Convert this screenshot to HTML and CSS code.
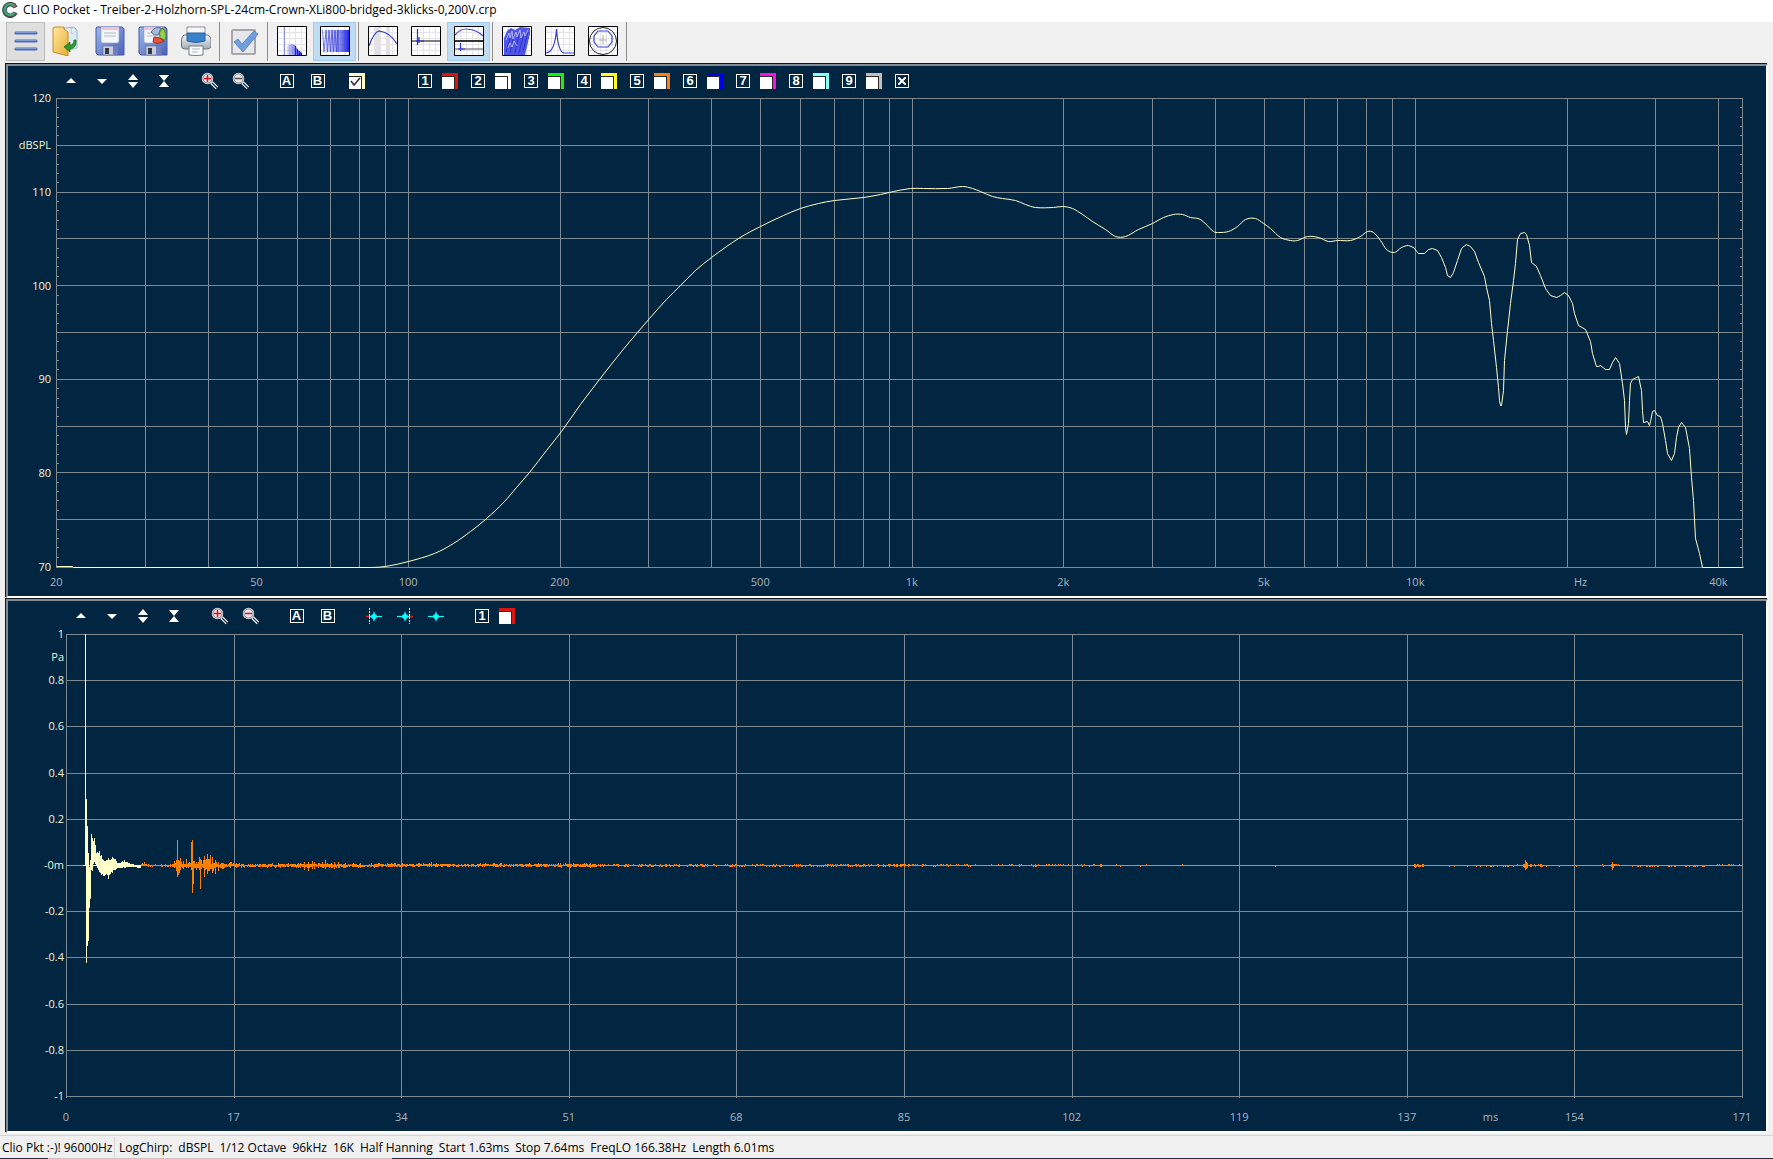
FILE: index.html
```html
<!DOCTYPE html>
<html lang="en">
<head>
<meta charset="utf-8">
<meta name="viewport" content="width=device-width, initial-scale=1">
<title>CLIO Pocket</title>
<link rel="stylesheet" href="styles.css">
</head>
<body>
<svg class="defs" aria-hidden="true">
  <defs>
    <linearGradient id="blue" x1="0" y1="0" x2="1" y2="1"><stop offset="0" stop-color="#9db8ea"/><stop offset="1" stop-color="#4a62bb"/></linearGradient>
    <linearGradient id="folder" x1="0" y1="0" x2="1" y2="1"><stop offset="0" stop-color="#ffe9a0"/><stop offset="1" stop-color="#e9ae35"/></linearGradient>
    <linearGradient id="metal" x1="0" y1="0" x2="0" y2="1"><stop offset="0" stop-color="#f4f6f8"/><stop offset="1" stop-color="#a3abb5"/></linearGradient>
    <linearGradient id="chirp" x1="0" y1="0" x2="1" y2="0"><stop offset="0" stop-color="#2a32e0" stop-opacity="0"/><stop offset="0.55" stop-color="#2a32e0" stop-opacity=".45"/><stop offset="1" stop-color="#2026e8"/></linearGradient>
    <linearGradient id="burst" x1="0" y1="0" x2="1" y2="0"><stop offset="0" stop-color="#2a32e0" stop-opacity=".15"/><stop offset="1" stop-color="#2026e8"/></linearGradient>
    <symbol id="floppy" viewBox="0 0 30 30">
      <path d="M2 1H27L29 3V29H3L1 27V2Z" fill="url(#blue)" stroke="#4658a8"/>
      <path d="M6 1H24V15Q24 17 22 17H8Q6 17 6 15Z" fill="#f5f6fb" stroke="#8d9ad0" stroke-width=".6"/>
      <path d="M6 1H24V4H6Z" fill="#f0c4cd"/>
      <path d="M9 7H21M9 10H21" stroke="#b5b9c4"/>
      <path d="M8 20H23V29H8Z" fill="#c9ced8" stroke="#5b699c" stroke-width=".6"/>
      <path d="M10 22H14V28H10Z" fill="#333a4a"/><path d="M18 20H23V29H18Z" fill="#6d7fc0"/>
    </symbol>
    <symbol id="thumb" viewBox="0 0 30 30">
      <path d="M1 1H29V29H1Z" fill="#fff"/>
      <path d="M6.500 1V29M12.500 1V29M18.500 1V29M24.500 1V29M1 6.500H29M1 12.500H29M1 18.500H29M1 24.500H29" stroke="#e4e4ea"/>
    </symbol>
    <symbol id="up" viewBox="0 0 16 16"><path d="M8 5L13 10H3Z"/></symbol>
    <symbol id="down" viewBox="0 0 16 16"><path d="M3 6H13L8 11Z"/></symbol>
    <symbol id="spread" viewBox="0 0 16 16"><path d="M8 1L13 7H3ZM3 9H13L8 15Z"/></symbol>
    <symbol id="squeeze" viewBox="0 0 16 16"><path d="M3 2H13L8 8ZM8 8L13 14H3Z"/></symbol>
    <symbol id="lens" viewBox="0 0 18 18">
      <path d="M10.500 10.500L16 16" stroke="#fff" stroke-width="3.500"/>
      <path d="M11 11L16.500 16.500" stroke="#14273c" stroke-width="1.200"/>
      <circle cx="6.500" cy="6.500" r="5" fill="#e9e4ea" stroke="#e8e8e8" stroke-width="1.500"/>
      <circle cx="6.500" cy="6.500" r="4.600" fill="none" stroke="#5b5560" stroke-width=".7"/>
    </symbol>
    <symbol id="pulse" viewBox="0 0 16 16"><path d="M0 8.500H16" stroke="#00ffff" stroke-width="1.200"/><path d="M4 8.500L7 6L8 3L9 6L12 8.500L9 11L8 14L7 11Z" fill="#00ffff"/></symbol>
  </defs>
</svg>

<header class="titlebar">
  <svg class="logo" viewBox="0 0 16 16" aria-hidden="true"><path d="M13.500 5.500A5.800 5.800 0 1 0 13.500 10.500" fill="none" stroke="#454a4d" stroke-width="4.600"/><path d="M13 5A5.500 5.500 0 1 0 12.500 11" fill="none" stroke="#3fa67d" stroke-width="2.400"/><path d="M13 1V6" stroke="#d23b2e" stroke-width="1"/></svg>
  <h1>CLIO Pocket - Treiber-2-Holzhorn-SPL-24cm-Crown-XLi800-bridged-3klicks-0,200V.crp</h1>
</header>

<nav class="toolbar" aria-label="Main">
  <button class="tool menu" aria-label="Menu"><svg viewBox="0 0 30 30"><path d="M5 7H25M5 15H25M5 23H25" stroke="#4d6cb0" stroke-width="3" stroke-linecap="round"/><path d="M5 6.500H25M5 14.500H25M5 22.500H25" stroke="#7e9bd6" stroke-width="1" stroke-linecap="round"/></svg></button>
  <button class="tool" aria-label="Open"><svg viewBox="0 0 30 30"><path d="M12 2L22 1L25 4V22L13 25Z" fill="#dcebf8" stroke="#9db7d0"/><path d="M19 2L25 4L20 8Z" fill="#f8fcff" stroke="#9db7d0" stroke-width=".6"/><path d="M1 2L3 1H12V3L16 6V30L1 26Z" fill="url(#folder)" stroke="#c98f26"/><path d="M24 14Q25 22 18 23V26L12 21L18 16V19Q22 19 22 14Z" fill="#2f9a2c" stroke="#17661a" stroke-width=".7"/></svg></button>
  <button class="tool" aria-label="Save"><svg viewBox="0 0 30 30"><use href="#floppy"/></svg></button>
  <button class="tool" aria-label="Export"><svg viewBox="0 0 30 30"><use href="#floppy"/><path d="M13 6Q17 0 23 2L20 9Q16 10 13 6Z" fill="#a9bce0" stroke="#53689c"/><path d="M24 2Q30 7 27 14L22 12Q20 7 24 2Z" fill="#9bd04a" stroke="#4f8a22"/><path d="M16 11Q22 11 26 15Q20 19 15 16Z" fill="#e4553b" stroke="#a02c1c"/></svg></button>
  <button class="tool" aria-label="Print"><svg viewBox="0 0 30 30"><path d="M6 1H24V10H6Z" fill="#f7f7f7" stroke="#8d949c"/><path d="M3 9H27Q30 10 30 14V21Q29 23 26 23H4Q1 23 0.500 21V14Q1 10 3 9Z" fill="url(#metal)" stroke="#6f7883"/><path d="M6 7H24V15Q15 18 6 15Z" fill="#3b82cc" stroke="#2a5f9c"/><path d="M8 20H22V29Q15 30 8 29Z" fill="#fff" stroke="#737b84"/><path d="M11 23H19M11 26H17" stroke="#aab0b8"/></svg></button>
  <span class="sep"></span>
  <button class="tool" aria-label="Apply"><svg viewBox="0 0 30 30"><rect x="3" y="4" width="23" height="24" rx="1" fill="#e6e7ea" stroke="#a5a7ab" stroke-width="2"/><path d="M5 16L9 13L13 18L25 5L29 8L14 26Z" fill="#6f9edb" stroke="#4c7dc0" stroke-width=".8"/></svg></button>
  <span class="sep"></span>
  <button class="tool" aria-label="FFT"><svg viewBox="0 0 30 30"><use href="#thumb"/><path d="M7.500 1V29" stroke="#8b8fe8"/><path d="M10 29V20L14 18L18 19L21 24L25 27V29Z" fill="url(#burst)"/><path d="M18.500 29V20M20.500 29V23M22.500 29V25M24.500 29V27" stroke="#1a20d8"/><path class="edge" d="M.5 .5H29.500V29.500H.5Z"/></svg></button>
  <button class="tool active" aria-label="LogChirp"><svg viewBox="0 0 30 30"><use href="#thumb"/><path d="M2.500 4L4 26L6 4L7.500 26L9 4L10.500 26L12 4L13.500 26L15 4L16.500 26L18 4V26" fill="none" stroke="#5358dc" stroke-width=".8"/><path d="M3 4H29V26H3Z" fill="url(#chirp)"/><path class="edge" d="M.5 .5H29.500V29.500H.5Z"/></svg></button>
  <span class="sep"></span>
  <button class="tool" aria-label="Frequency"><svg viewBox="0 0 30 30"><use href="#thumb"/><path d="M7 1H12V29H7ZM18 1H22V29H18Z" fill="#e2e2e2"/><path d="M1 20Q6 6 11 5Q22 6 29 18" fill="none" stroke="#2f34cc" stroke-width="1.200"/><path class="edge" d="M.5 .5H29.500V29.500H.5Z"/></svg></button>
  <button class="tool" aria-label="Time"><svg viewBox="0 0 30 30"><use href="#thumb"/><path d="M1 15H29" stroke="#555" stroke-width="1.500"/><path d="M6.500 3V19M8 11V17M5 15H13" stroke="#2a30d8" stroke-width="1.200"/><path class="edge" d="M.5 .5H29.500V29.500H.5Z"/></svg></button>
  <button class="tool active" aria-label="Frequency and time"><svg viewBox="0 0 30 30"><use href="#thumb"/><path d="M1 9Q6 3 12 3Q22 3 29 10" fill="none" stroke="#4a4fd0" stroke-width="1.200"/><path d="M0 15H30" stroke="#333" stroke-width="2"/><path d="M1 23H29" stroke="#555"/><path d="M6.500 17V25M4 23H11" stroke="#2a30d8" stroke-width="1.200"/><path class="edge" d="M.5 .5H29.500V29.500H.5Z"/></svg></button>
  <span class="sep"></span>
  <button class="tool" aria-label="Waterfall"><svg viewBox="0 0 30 30"><use href="#thumb"/><path d="M5 5L9 2L13 4L18 1L28 2V8L23 29H2V12Z" fill="#5055ea"/><path d="M4 26L8 12M8 27L12 9M13 27L17 8M17 27L22 7M21 25L26 6" stroke="#2a2fc8"/><path d="M4 14L7 7L8 12L10 5L11 13L14 6L15 11L18 4L19 12L22 6L23 10L26 4M6 22L8 17L10 21L12 15L15 20" fill="none" stroke="#c8caff" stroke-width=".8"/><path class="edge" d="M.5 .5H29.500V29.500H.5Z"/></svg></button>
  <button class="tool" aria-label="Impedance"><svg viewBox="0 0 30 30"><use href="#thumb"/><path d="M1 27Q10 26 11.500 3Q13 26 19 27H29" fill="none" stroke="#3b40d4" stroke-width="1.200"/><path class="edge" d="M.5 .5H29.500V29.500H.5Z"/></svg></button>
  <button class="tool" aria-label="Polar"><svg viewBox="0 0 30 30"><use href="#thumb"/><circle cx="15" cy="15" r="13.500" fill="none" stroke="#222"/><path d="M10 5H20L24 10V16L20 21H10L6 16V10Z" fill="none" stroke="#3b40d4" stroke-width="1.200" stroke-linejoin="round"/><path d="M15 9V18M11 14H19" stroke="#aaa"/><path class="edge" d="M.5 .5H29.500V29.500H.5Z"/></svg></button>
  <span class="sep"></span>
</nav>

<main class="workspace">
  <section class="panel response" aria-label="Frequency response">
    <div class="chartbar">
      <div class="group">
        <button class="mini" aria-label="Move up"><svg><use href="#up"/></svg></button>
        <button class="mini" aria-label="Move down"><svg><use href="#down"/></svg></button>
        <button class="mini" aria-label="Expand"><svg><use href="#spread"/></svg></button>
        <button class="mini" aria-label="Compress"><svg><use href="#squeeze"/></svg></button>
      </div>
      <div class="group">
        <button class="mini" aria-label="Zoom in"><svg class="zoom" viewBox="0 0 18 18"><use href="#lens"/><path d="M3 6.500H10M6.500 3V10" stroke="#e01020" stroke-width="1.500"/></svg></button>
        <button class="mini" aria-label="Zoom out"><svg class="zoom" viewBox="0 0 18 18"><use href="#lens"/><path d="M3 6.500H10" stroke="#555" stroke-width="1.500"/></svg></button>
      </div>
      <div class="group">
        <button class="mini"><span class="key">A</span></button>
        <button class="mini"><span class="key">B</span></button>
      </div>
      <input class="swatch main" type="checkbox" checked aria-label="Main trace">
      <div class="traces">
        <label class="trace"><span class="key">1</span><input class="swatch red" type="checkbox"></label>
        <label class="trace"><span class="key">2</span><input class="swatch white" type="checkbox"></label>
        <label class="trace"><span class="key">3</span><input class="swatch green" type="checkbox"></label>
        <label class="trace"><span class="key">4</span><input class="swatch yellow" type="checkbox"></label>
        <label class="trace"><span class="key">5</span><input class="swatch orange" type="checkbox"></label>
        <label class="trace"><span class="key">6</span><input class="swatch blue" type="checkbox"></label>
        <label class="trace"><span class="key">7</span><input class="swatch magenta" type="checkbox"></label>
        <label class="trace"><span class="key">8</span><input class="swatch cyan" type="checkbox"></label>
        <label class="trace"><span class="key">9</span><input class="swatch grey" type="checkbox"></label>
        <button class="close" aria-label="Clear traces"><span class="key"><svg class="cross" viewBox="0 0 8 8"><path d="M0 0L8 8M8 0L0 8" stroke="#fff" stroke-width="2"/></svg></span></button>
      </div>
    </div>
    <div class="yaxis">
      <span>120</span><span>dBSPL</span><span>110</span><span></span><span>100</span><span></span><span>90</span><span></span><span>80</span><span></span><span>70</span>
    </div>
    <svg class="plot" id="response" viewBox="56 98 1686 469" preserveAspectRatio="none" role="img" aria-label="Sound pressure level against frequency"></svg>
    <div class="xaxis log" id="frequencies"></div>
  </section>

  <section class="panel impulse" aria-label="Impulse response">
    <div class="chartbar">
      <div class="group">
        <button class="mini" aria-label="Move up"><svg><use href="#up"/></svg></button>
        <button class="mini" aria-label="Move down"><svg><use href="#down"/></svg></button>
        <button class="mini" aria-label="Expand"><svg><use href="#spread"/></svg></button>
        <button class="mini" aria-label="Compress"><svg><use href="#squeeze"/></svg></button>
      </div>
      <div class="group">
        <button class="mini" aria-label="Zoom in"><svg class="zoom" viewBox="0 0 18 18"><use href="#lens"/><path d="M3 6.500H10M6.500 3V10" stroke="#e01020" stroke-width="1.500"/></svg></button>
        <button class="mini" aria-label="Zoom out"><svg class="zoom" viewBox="0 0 18 18"><use href="#lens"/><path d="M3 6.500H10" stroke="#e01020" stroke-width="1.500"/></svg></button>
      </div>
      <div class="group">
        <button class="mini"><span class="key">A</span></button>
        <button class="mini"><span class="key">B</span></button>
      </div>
      <div class="group">
        <button class="mini" aria-label="Window start"><svg viewBox="0 0 16 16"><use href="#pulse"/><path d="M3.500 0V16" stroke="#ffff40" stroke-dasharray="2 1"/><path d="M0 8.500H3" stroke="#e02020"/></svg></button>
        <button class="mini" aria-label="Window stop"><svg viewBox="0 0 16 16"><use href="#pulse"/><path d="M12.500 0V16" stroke="#ffff40" stroke-dasharray="2 1"/><path d="M13 8.500H16" stroke="#e02020"/></svg></button>
        <button class="mini" aria-label="Full window"><svg viewBox="0 0 16 16"><use href="#pulse"/></svg></button>
      </div>
      <div class="traces">
        <label class="trace"><span class="key">1</span><input class="swatch red" type="checkbox"></label>
      </div>
    </div>
    <div class="yaxis">
      <span>1</span><span>Pa</span><span>0.8</span><span></span><span>0.6</span><span></span><span>0.4</span><span></span><span>0.2</span><span></span><span>-0m</span><span></span><span>-0.2</span><span></span><span>-0.4</span><span></span><span>-0.6</span><span></span><span>-0.8</span><span></span><span>-1</span>
    </div>
    <svg class="plot" id="impulse" viewBox="66 634 1676 462" preserveAspectRatio="none" role="img" aria-label="Sound pressure against time"></svg>
    <div class="xaxis linear">
      <span>0</span><span></span><span>17</span><span></span><span>34</span><span></span><span>51</span><span></span><span>68</span><span></span><span>85</span><span></span><span>102</span><span></span><span>119</span><span></span><span>137</span><span>ms</span><span>154</span><span></span><span>171</span>
    </div>
  </section>
</main>

<footer class="status">
  <span class="device">Clio Pkt :-)! 96000Hz</span>
  <span class="settings"><span>LogChirp:</span><span>dBSPL</span><span>1/12 Octave</span><span>96kHz</span><span>16K</span><span>Half Hanning</span><span>Start 1.63ms</span><span>Stop 7.64ms</span><span>FreqLO 166.38Hz</span><span>Length 6.01ms</span></span>
</footer>
<script src="charts.js"></script>
</body>
</html>
```

FILE: styles.css
```css
* { box-sizing: border-box; }

body {
  margin: 0;
  min-height: 100vh;
  display: flex;
  flex-direction: column;
  background: #f0f0f0;
  color: #000;
  font: 12px/16px "Open Sans", "Noto Sans", sans-serif;
}

button { margin: 0; padding: 0; border: 0; background: none; font: inherit; color: inherit; }
.defs { position: absolute; width: 0; height: 0; }

.titlebar { display: flex; align-items: center; gap: 5px; height: 22px; padding-left: 2px; padding-bottom: 2px; background: #fff; }
.titlebar h1 { margin: 0; font-size: 12px; font-weight: 400; white-space: nowrap; }
.logo { width: 16px; height: 16px; }

.toolbar { display: flex; height: 41px; padding: 0 0 2px 6px; }
.tool { display: flex; align-items: center; justify-content: center; width: 43px; padding-bottom: 1px; border: 1px solid transparent; }
.tool svg { width: 30px; height: 30px; fill: none; }
.tool.menu { width: 39px; background: #dfdfdf; border-color: #bdbdbd; }
.tool.active { background: #c0dcf3; border-color: #a3cdf0; }
.edge { fill: none; stroke: #000; }
.sep { width: 5px; background: linear-gradient(#8d8d8d, #8d8d8d) center / 1px 100% no-repeat; }

.workspace { flex: 1; display: flex; flex-direction: column; margin: 0 5px 0 6px; }

.panel {
  flex: 1;
  display: grid;
  min-height: 320px;
  margin-top: 1px;
  background: #022541;
  border: 2px solid;
  border-color: #828c96 #fff #fff #828c96;
  box-shadow: -1px -1px 0 #10151b;
}
.response { grid-template: 32px 1fr 29px / 48px 1fr 24px; }
.impulse { grid-template: 33px 1fr 35px / 58px 1fr 24px; }

.chartbar { grid-column: 1 / -1; display: flex; align-items: center; gap: 15px; height: 30px; padding-left: 47px; }
.impulse .chartbar { padding-left: 57px; }
.group, .traces { display: flex; align-items: center; }
.mini { display: flex; align-items: center; justify-content: center; width: 31px; height: 20px; }
.mini svg { width: 16px; height: 16px; fill: #fff; }
.mini .zoom { width: 18px; height: 18px; }
.key { display: flex; align-items: center; justify-content: center; width: 14px; height: 14px; border: 1px solid #fff; color: #fff; font: 700 13px/12px "Liberation Sans", sans-serif; }
.cross { width: 8px; height: 8px; }
.traces { margin-left: 38px; }
.impulse .traces { margin-left: 9px; }
.trace { display: flex; align-items: center; gap: 10px; width: 53px; }

.swatch {
  appearance: none;
  width: 16px;
  height: 16px;
  margin: 0;
  border-top: 3px solid var(--ink);
  border-right: 3px solid var(--ink);
  background: linear-gradient(#fff, #fff) 0 100% / 12px 12px no-repeat, #2a2a20;
}
.main { --ink: #ffffc8; background: url("data:image/svg+xml,%3Csvg xmlns='http://www.w3.org/2000/svg' viewBox='0 0 12 12'%3E%3Cpath d='M2 5L5 9L11 2' fill='none' stroke='%23333' stroke-width='1.600'/%3E%3C/svg%3E") 0 0 / 12px 12px no-repeat, linear-gradient(#fff, #fff) 0 100% / 12px 12px no-repeat, #2a2a20; margin-left: 1px; }
.red { --ink: #dc1414; }
.white { --ink: #fff; }
.green { --ink: #14f014; }
.yellow { --ink: #ffff20; }
.orange { --ink: #f08020; }
.blue { --ink: #0000e6; }
.magenta { --ink: #f014e6; }
.cyan { --ink: #80ffff; }
.grey { --ink: #c0c0c0; }

.yaxis { display: flex; flex-direction: column; justify-content: space-between; align-items: flex-end; padding-right: 5px; color: #f4f4d6; font-size: 11px; }
.impulse .yaxis { padding-right: 2px; }
.yaxis span { height: 0; line-height: 0; }

.plot { display: block; grid-column: 2; width: 100%; height: 100%; min-height: 0; overflow: visible; fill: none; shape-rendering: crispEdges; }
.plot path { vector-effect: non-scaling-stroke; }
.grid { stroke: #7f8a90; }
.curve { stroke: #ffffc8; }
.tail { stroke: #ff8000; }
.smooth { shape-rendering: auto; }

.xaxis { grid-column: 2; color: #aab6c0; font-size: 11px; }
.log { position: relative; }
.log span { position: absolute; top: 7px; width: 40px; margin-left: -20px; text-align: center; }
.linear { display: flex; justify-content: space-between; padding-top: 13px; }
.linear span { display: flex; justify-content: center; width: 0; }

.status {
  display: flex;
  height: 26px;
  padding: 4px 0 0;
  background:
    linear-gradient(#d4d4d4, #d4d4d4) 0 2px / 100% 1px no-repeat,
    linear-gradient(90deg, #16314c 48px, #c4c4c4 48px 392px, #16314c 392px) 0 100% / 100% 1px no-repeat;
  line-height: 22px;
  white-space: nowrap;
}
.device { width: 115px; height: 20px; padding-left: 2px; border-right: 1px solid #d4d4d4; }
.settings { display: flex; gap: 6px; padding-left: 4px; }
```

FILE: charts.js
```js
const NS = "http://www.w3.org/2000/svg";

function addPath(svg, className, d) {
  const path = document.createElementNS(NS, "path");
  path.setAttribute("class", className);
  path.setAttribute("d", d);
  svg.append(path);
}

/* Frequency response: log axis from 20 Hz, 503.5 units to a decade */
const response = document.getElementById("response");
const freqX = f => 56.3 + 503.5 * Math.log10(f / 20);

let grid = "";
for (const decade of [10, 100, 1000, 10000]) {
  for (let n = 1; n < 10; n++) {
    const f = decade * n;
    if (f < 20 || f > 40000) continue;
    grid += `M${Math.round(freqX(f)) + 0.5} 98V567`;
  }
}
grid += "M1742.5 98V567M56 567.5H1743";
for (let db = 0; db < 50; db++) {
  const y = Math.round(98 + db * 9.36) + 0.5;
  grid += db % 5 === 0 ? `M56 ${y}H1743` : `M56 ${y}H59M1740 ${y}H1743`;
}
addPath(response, "grid", grid);

const level = [
  56,566, 72,566, 73,567, 370,567, 385,566, 408,561, 434,553, 453,543, 470,531, 485,519, 504,501, 516,487, 529,472,
  546,450, 561,431, 580,404, 599,379, 621,351, 637,332, 649,318, 666,299, 680,285, 695,270, 711,257, 738,238,
  760,226, 783,215, 800,208, 818,203, 834,200, 863,197, 880,194, 893,191, 910,188, 923,188, 947,188,
  962,186, 972,188, 980,191, 992,196, 1002,198, 1015,200, 1025,204, 1035,207, 1053,207, 1062,206, 1072,208,
  1082,214, 1092,221, 1105,229, 1115,236, 1125,236, 1138,229, 1152,223, 1163,217, 1173,214, 1182,214, 1190,217,
  1200,219, 1213,231, 1218,232, 1228,231, 1237,226, 1245,219, 1255,218, 1263,223, 1270,228, 1280,237, 1290,240,
  1297,240, 1307,236, 1318,237, 1328,241, 1337,240, 1350,240, 1360,236, 1367,231, 1373,232, 1380,240, 1386,249,
  1394,252, 1401,247, 1408,245, 1413,247, 1418,253, 1424,253, 1428,249, 1432,248, 1437,250, 1441,257, 1445,267,
  1447,275, 1450,277, 1453,272, 1457,260, 1461,248, 1466,244, 1470,246, 1474,251, 1478,262, 1484,276, 1486,287,
  1489,300, 1491,323, 1493,340, 1496,367, 1498,387, 1499,400, 1500,405, 1501,405, 1503,390, 1504,360, 1507,330,
  1510,303, 1513,280, 1515,263, 1517,239, 1520,233, 1524,232, 1526,234, 1529,245, 1531,262, 1536,266, 1540,275,
  1545,288, 1550,295, 1556,297, 1560,295, 1564,292, 1568,295, 1572,303, 1574,313, 1578,325, 1585,329, 1590,341,
  1592,353, 1596,366, 1598,366, 1600,365, 1605,369, 1609,369, 1612,362, 1615,357, 1619,363, 1622,383, 1624,400,
  1625,427, 1626,434, 1628,423, 1629,400, 1630,383, 1632,379, 1638,376, 1641,390, 1642,410, 1643,422, 1647,421,
  1649,425, 1650,421, 1652,411, 1654,410, 1657,415, 1660,416, 1662,423, 1665,440, 1667,453, 1671,460, 1674,453,
  1676,437, 1678,427, 1681,422, 1685,427, 1689,448, 1691,477, 1693,500, 1695,538, 1699,553, 1702,567, 1743,567
];

/* Interpolate with a spline between 370 and 1410, where samples are sparse; straight steps elsewhere */
const points = [];
for (let i = 0; i < level.length; i += 2) points.push([level[i] + 0.5, level[i + 1] + 0.5]);
const slope = i => (points[i + 1][1] - points[i - 1][1]) / (points[i + 1][0] - points[i - 1][0]);
let curve = `M${points[0]}`;
for (let i = 1; i < points.length; i++) {
  const [x0, y0] = points[i - 1];
  const [x1, y1] = points[i];
  if (x0 < 370 || x1 > 1410) {
    curve += `L${x1} ${y1}`;
    continue;
  }
  const h = (x1 - x0) / 3;
  const start = x0 < 371 ? 0 : slope(i - 1);
  curve += `C${x0 + h} ${y0 + h * start} ${x1 - h} ${y1 - h * slope(i)} ${x1} ${y1}`;
}
addPath(response, "curve smooth", curve);

const frequencies = document.getElementById("frequencies");
const marks = [[20, "20"], [50, "50"], [100, "100"], [200, "200"], [500, "500"], [1000, "1k"], [2000, "2k"],
  [5000, "5k"], [10000, "10k"], [21300, "Hz"], [40000, "40k"]];
for (const [f, text] of marks) {
  const label = document.createElement("span");
  label.textContent = text;
  label.style.left = `${((freqX(f) - 56) / 16.86).toFixed(2)}%`;
  frequencies.append(label);
}

/* Impulse response: ten divisions each way, zero line at 865 */
const impulse = document.getElementById("impulse");
let cells = "";
for (let i = 0; i <= 10; i++) {
  cells += `M${Math.round(66 + i * 167.6) + 0.5} 634V1098`;
  cells += `M66 ${Math.round(634 + i * 46.2) + 0.5}H1743`;
}
addPath(impulse, "grid", cells);

let seed = 7;
function random() {
  seed = (seed * 16807) % 2147483647;
  return seed / 2147483647;
}

/* Each entry: position, reach above zero, reach below zero */
function bars(envelope, spread) {
  const noise = () => 1 - spread * Math.sqrt(random());
  let d = "";
  for (let i = 0; i < envelope.length - 1; i++) {
    const [x0, up0, down0] = envelope[i];
    const [x1, up1, down1] = envelope[i + 1];
    for (let x = x0; x < x1; x++) {
      const t = (x - x0) / (x1 - x0);
      const up = Math.round((up0 + (up1 - up0) * t) * (x === x0 ? 1 : noise()));
      const down = Math.round((down0 + (down1 - down0) * t) * (x === x0 ? 1 : noise()));
      d += `M${x + 0.5} ${865 - up}V${866 + down}`;
    }
  }
  return d;
}

const tail = [
  [141, 1, 0], [144, 3, 0], [148, 1, 1], [170, 1, 1], [174, 4, 2], [176, 5, 5], [177, 25, 11], [178, 5, 9],
  [179, 4, 7], [180, 7, 4], [183, 4, 3], [186, 6, 2], [188, 2, 2], [191, 23, 4], [192, 25, 27], [193, 4, 18],
  [194, 4, 2], [196, 3, 4], [199, 8, 4], [200, 6, 23], [201, 5, 3], [204, 9, 11], [205, 5, 4], [207, 11, 8],
  [209, 6, 5], [210, 10, 3], [212, 8, 7], [215, 5, 8], [218, 3, 5], [222, 2, 3], [230, 3, 2], [236, 2, 2],
  [300, 2, 2], [304, 3, 4], [308, 3, 5], [312, 4, 3], [314, 3, 3], [325, 5, 3], [334, 3, 3], [345, 2, 2],
  [360, 2, 2], [431, 3, 1], [436, 2, 1], [500, 2, 1], [590, 2, 2], [600, 1, 1], [900, 1, 1], [901, 1, 0.8],
  [1100, 0.8, 0.6], [1101, 0.6, 0.6], [1414, 0.5, 0.5], [1415, 1, 2], [1422, 1, 1], [1423, 0.5, 0.5],
  [1513, 0, 1], [1517, 1, 0], [1523, 0.5, 1], [1524, 1, 2], [1525, 5, 4], [1526, 3, 3], [1527, 2, 2],
  [1531, 1, 1], [1540, 1, 1], [1541, 0.6, 0.6], [1611, 0.6, 0.6], [1612, 3, 4], [1613, 1, 2], [1616, 1, 0],
  [1632, 0, 1], [1640, 0, 1], [1647, 0, 1], [1703, 0, 1], [1719, 1, 0], [1739, 1, 0], [1742, 0, 0]
];
addPath(impulse, "tail", "M66 865.5H1743" + bars(tail, 0.9));

const body = [
  [85, 231, 0], [86, 66, 97], [87, 39, 80], [88, 12, 75], [89, -2, 42], [90, 5, 33], [91, 31, 4], [92, 27, 5],
  [93, 24, -2], [94, 27, -4], [95, 20, -2], [97, 13, 2], [99, 14, 6], [101, 10, 9], [103, 5, 10], [107, 5, 9],
  [108, 7, 13], [109, 5, 9], [112, 8, 7], [115, 6, 4], [118, 2, 2], [122, 4, 2], [124, 5, 2], [127, 3, 1],
  [131, 1, 1], [137, 0, 2], [141, 0, 2]
];
addPath(impulse, "curve", "M83 865.5H141" + bars(body, 0.3));
```
